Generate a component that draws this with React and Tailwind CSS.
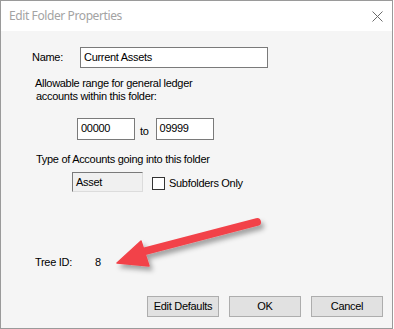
import React from "react";

function CloseIcon() {
  return (
    <svg width="11" height="11" viewBox="0 0 11 11" className="block">
      <path d="M0.5 0.5 L10.5 10.5 M10.5 0.5 L0.5 10.5" stroke="#6b6b6b" strokeWidth="1" />
    </svg>
  );
}

function RedArrow() {
  return (
    <svg
      width="170"
      height="70"
      viewBox="100 210 170 70"
      className="absolute left-[100px] top-[210px] pointer-events-none"
    >
      <defs>
        <filter id="shadow" x="-20%" y="-40%" width="140%" height="180%">
          <feDropShadow dx="3" dy="4" stdDeviation="2.5" floodColor="#000" floodOpacity="0.35" />
        </filter>
      </defs>
      <g filter="url(#shadow)">
        <line x1="257" y1="222" x2="138" y2="253" stroke="#f2434a" strokeWidth="8" strokeLinecap="round" />
        <path d="M117 263 L141 241 L149 266 Z" fill="#f2434a" stroke="#f2434a" strokeWidth="1.5" strokeLinejoin="round" />
      </g>
    </svg>
  );
}

function Button({ children }) {
  return (
    <button className="w-[72px] h-[21px] bg-[#e1e1e1] border border-[#adadad] text-[11px] text-black leading-none">
      {children}
    </button>
  );
}

export default function App() {
  return (
    <div className="w-[394px] h-[329px] bg-white relative font-['Liberation_Sans',Arial,sans-serif] text-[11px] tracking-[-0.3px] text-black">
      <div className="w-[393px] h-[329px] border border-[#9a9a9a] bg-[#f5f5f5] flex flex-col">
        {/* Title bar */}
        <div className="h-[30px] bg-white flex items-center justify-between pl-[8px] pr-[9px]">
          <span className="font-['Noto_Sans',sans-serif] text-[12px] tracking-[-0.4px] text-[#a3a3a3]">Edit Folder Properties</span>
          <CloseIcon />
        </div>

        {/* Body */}
        <div className="flex flex-col pl-[31px] leading-[13px]">
          <div className="flex items-center mt-[16px]">
            <span className="w-[48px]">Name:</span>
            <div className="w-[188px] h-[21px] bg-white border border-[#7a7a7a] flex items-center pl-[3px]">
              Current Assets
            </div>
          </div>

          <div className="mt-[9px] pl-[3px]">
            <div>Allowable range for general ledger</div>
            <div className="pl-[1px]">accounts within this folder:</div>
          </div>

          <div className="flex items-center mt-[15px] pl-[45px]">
            <div className="w-[58px] h-[22px] bg-white border border-[#7a7a7a] pl-[3px] pt-[3px]">00000</div>
            <span className="ml-[5px] mr-[7px] mt-[5px]">to</span>
            <div className="w-[58px] h-[22px] bg-white border border-[#7a7a7a] pl-[3px] pt-[3px]">09999</div>
          </div>

          <div className="mt-[13px] pl-[4px]">Type of Accounts going into this folder</div>

          <div className="flex items-center mt-[6px] pl-[40px]">
            <div className="w-[71px] h-[20px] bg-[#f0f0f0] border-t border-l border-t-[#7a7a7a] border-l-[#7a7a7a] border-b border-r border-b-[#dcdcdc] border-r-[#dcdcdc] pl-[3px] pt-[3px]">
              Asset
            </div>
            <div className="w-[13px] h-[13px] bg-white border border-[#333333] ml-[9px] mt-[2px]" />
            <span className="ml-[4px] mt-[2px]">Subfolders Only</span>
          </div>

          <div className="flex mt-[64px] pl-[3px]">
            <span className="w-[60px]">Tree ID:</span>
            <span>8</span>
          </div>
        </div>

        <div className="flex justify-end gap-[10px] pr-[9px] mt-[27px]">
          <Button>Edit Defaults</Button>
          <Button>OK</Button>
          <Button>Cancel</Button>
        </div>
      </div>
      <RedArrow />
    </div>
  );
}
